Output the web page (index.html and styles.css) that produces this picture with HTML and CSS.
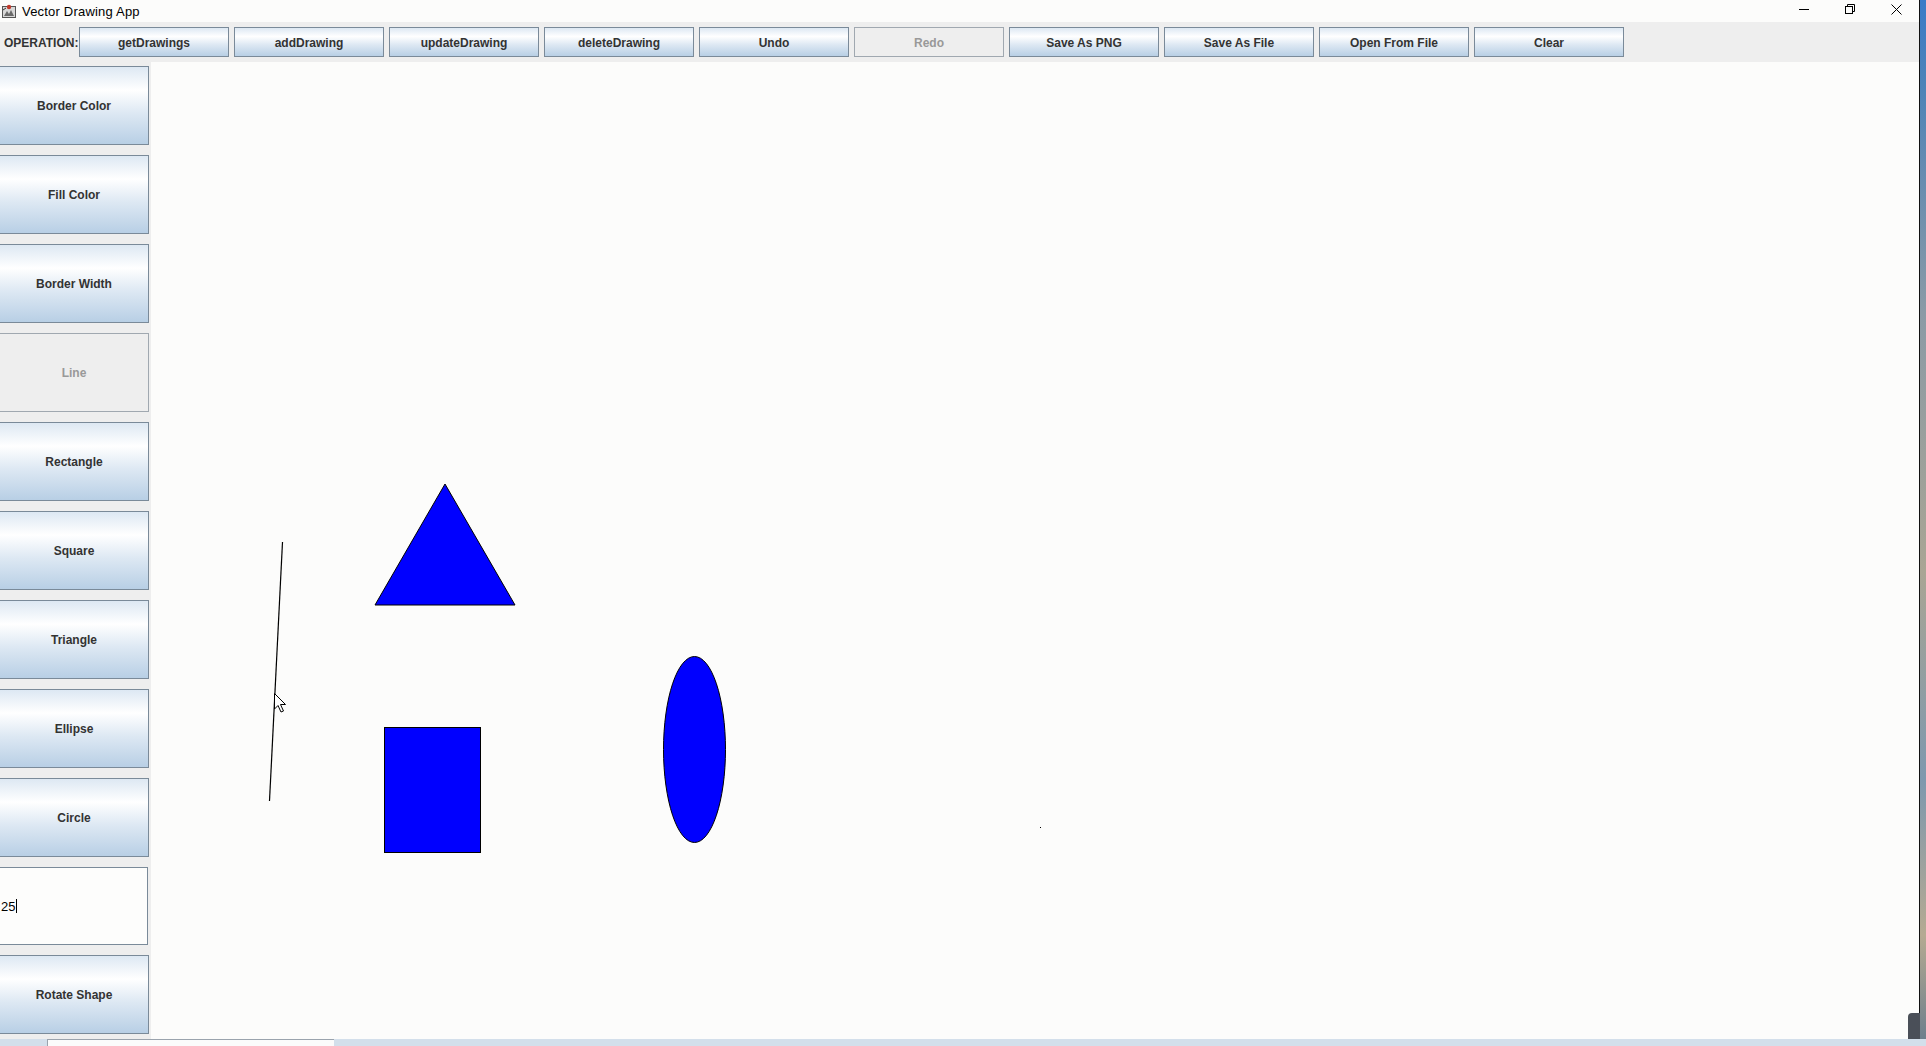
FILE: index.html
```html
<!DOCTYPE html>
<html>
<head>
<meta charset="utf-8">
<title>Vector Drawing App</title>
<link rel="stylesheet" href="styles.css">
</head>
<body>
<div class="screen">
  <div class="window">
    <div class="titlebar">
      <svg class="app-icon" width="14" height="14" viewBox="0 0 14 14">
        <rect x="0.5" y="2.5" width="13" height="11" fill="#d8d8d8" stroke="#555"/>
        <path d="M2 12 L5 7 L7 10 L9 6 L12 12 Z" fill="#6a6a6a"/>
        <circle cx="7" cy="3" r="2.2" fill="#c0392b"/>
        <path d="M1 6 L4 4" stroke="#333" stroke-width="1"/>
      </svg>
      <span class="title">Vector Drawing App</span>
      <div class="controls">
        <div class="ctl"><svg width="10" height="10" viewBox="0 0 10 10"><path d="M0 5.5 H10" stroke="#000" stroke-width="1"/></svg></div>
        <div class="ctl"><svg width="10" height="10" viewBox="0 0 10 10"><rect x="0.5" y="2.5" width="7" height="7" fill="none" stroke="#000"/><path d="M2.5 2.5 V0.5 H9.5 V7.5 H7.5" fill="none" stroke="#000"/></svg></div>
        <div class="ctl"><svg width="11" height="11" viewBox="0 0 11 11"><path d="M0.5 0.5 L10.5 10.5 M10.5 0.5 L0.5 10.5" stroke="#000" stroke-width="1"/></svg></div>
      </div>
    </div>
    <div class="toolbar">
      <span class="op-label">OPERATION:</span>
      <button class="btn tb">getDrawings</button>
      <button class="btn tb">addDrawing</button>
      <button class="btn tb">updateDrawing</button>
      <button class="btn tb">deleteDrawing</button>
      <button class="btn tb">Undo</button>
      <button class="btn tb disabled">Redo</button>
      <button class="btn tb">Save As PNG</button>
      <button class="btn tb">Save As File</button>
      <button class="btn tb">Open From File</button>
      <button class="btn tb">Clear</button>
    </div>
    <div class="main">
      <div class="side">
        <button class="btn sb">Border Color</button>
        <button class="btn sb">Fill Color</button>
        <button class="btn sb">Border Width</button>
        <button class="btn sb disabled">Line</button>
        <button class="btn sb">Rectangle</button>
        <button class="btn sb">Square</button>
        <button class="btn sb">Triangle</button>
        <button class="btn sb">Ellipse</button>
        <button class="btn sb">Circle</button>
        <div class="field"><span class="field-text">25</span><span class="caret"></span></div>
        <button class="btn sb">Rotate Shape</button>
      </div>
      <div class="canvas">
        <svg class="drawing" width="1768" height="977" viewBox="0 0 1768 977">
          <line x1="131.5" y1="480" x2="118.5" y2="739" stroke="#000" stroke-width="1.2"/>
          <polygon points="294,422 224,543 364,543" fill="#0000ff" stroke="#000" stroke-width="1"/>
          <rect x="233.5" y="665.5" width="96" height="125" fill="#0000ff" stroke="#000" stroke-width="1"/>
          <ellipse cx="543.5" cy="687.5" rx="31" ry="93" fill="#0000ff" stroke="#000" stroke-width="1"/>
          <rect x="889" y="765" width="1" height="1" fill="#000"/>
          <path d="M123.5 631.5 L123.5 647 L127 643.5 L130 650 L132.5 649 L129.5 642.5 L134.5 642.5 Z" fill="#fff" stroke="#000" stroke-width="1"/>
        </svg>
      </div>
    </div>
  </div>
  <div class="desktop-edge"><div class="edge-thing"></div></div>
</div>
<div class="taskbar">
  <div class="task-box"></div>
</div>
</body>
</html>
```
FILE: styles.css
```css
html, body {
  margin: 0;
  padding: 0;
}
body {
  width: 1926px;
  height: 1046px;
  overflow: hidden;
  font-family: "Liberation Sans", Arial, sans-serif;
  background: #d3dfeb;
}
.screen {
  display: flex;
  height: 1039px;
}
.window {
  width: 1919px;
  display: flex;
  flex-direction: column;
  border-right: 1px solid #111;
}
.titlebar {
  height: 22px;
  display: flex;
  align-items: center;
  background: #fcfcfb;
}
.app-icon {
  margin-left: 2px;
  margin-right: 6px;
  flex: none;
}
.title {
  font-size: 13px;
  color: #000;
  letter-spacing: 0.2px;
}
.controls {
  margin-left: auto;
  display: flex;
  height: 22px;
}
.ctl {
  width: 46px;
  display: flex;
  align-items: center;
  justify-content: center;
  padding-bottom: 4px;
  box-sizing: border-box;
}
.toolbar {
  height: 40px;
  background: #eeeeee;
  display: flex;
  align-items: center;
  gap: 5px;
  padding-left: 4px;
}
.op-label {
  width: 70px;
  font-size: 12px;
  font-weight: bold;
  color: #333;
  padding-top: 1px;
}
.btn {
  box-sizing: border-box;
  border: 1px solid #7a8a99;
  background: linear-gradient(to bottom, #dde8f3 0%, #ffffff 30%, #dde8f3 60%, #b8cfe5 100%);
  font-family: "Liberation Sans", Arial, sans-serif;
  font-size: 12px;
  font-weight: bold;
  color: #333;
  padding: 0;
  margin: 0;
  display: flex;
  align-items: center;
  justify-content: center;
}
.btn.disabled {
  background: #eeeeee;
  border-color: #a0a8b0;
  color: #999;
}
.tb {
  width: 150px;
  height: 30px;
  padding-top: 2px;
}
.main {
  flex: 1;
  display: flex;
}
.side {
  width: 151px;
  flex: none;
  background: #eeeeee;
  padding-top: 4px;
  box-sizing: border-box;
  display: flex;
  flex-direction: column;
  gap: 10px;
}
.sb {
  width: 149px;
  height: 79px;
  border-left: none;
}
.field {
  width: 148px;
  height: 78px;
  box-sizing: border-box;
  background: #fdfdfc;
  border: 1px solid #7a8a99;
  border-left: none;
  display: flex;
  align-items: center;
  font-size: 13px;
  color: #000;
  padding-left: 1px;
}
.caret {
  width: 1px;
  height: 14px;
  background: #000;
  margin-left: 1px;
}
.canvas {
  flex: 1;
  position: relative;
  background: #fcfcfb;
}
.drawing {
  position: absolute;
  left: 0;
  top: 0;
}
.desktop-edge {
  flex: 1;
  position: relative;
  background: linear-gradient(to bottom, #3a7bc8 0%, #4d83b8 8%, #8b9aa6 30%, #a9a594 55%, #7e98ae 75%, #b5aa92 90%, #6d7f8c 100%);
}
.edge-thing {
  position: absolute;
  left: -12px;
  bottom: 0;
  width: 12px;
  height: 26px;
  background: #4a4f58;
  border-top-left-radius: 4px;
}
.taskbar {
  height: 7px;
  background: #d3dfeb;
  position: relative;
}
.task-box {
  position: absolute;
  left: 47px;
  top: 0;
  width: 287px;
  height: 7px;
  box-sizing: border-box;
  background: #fbfbfb;
  border-top: 1px solid #9aa3ad;
  border-left: 1px solid #9aa3ad;
}
```
